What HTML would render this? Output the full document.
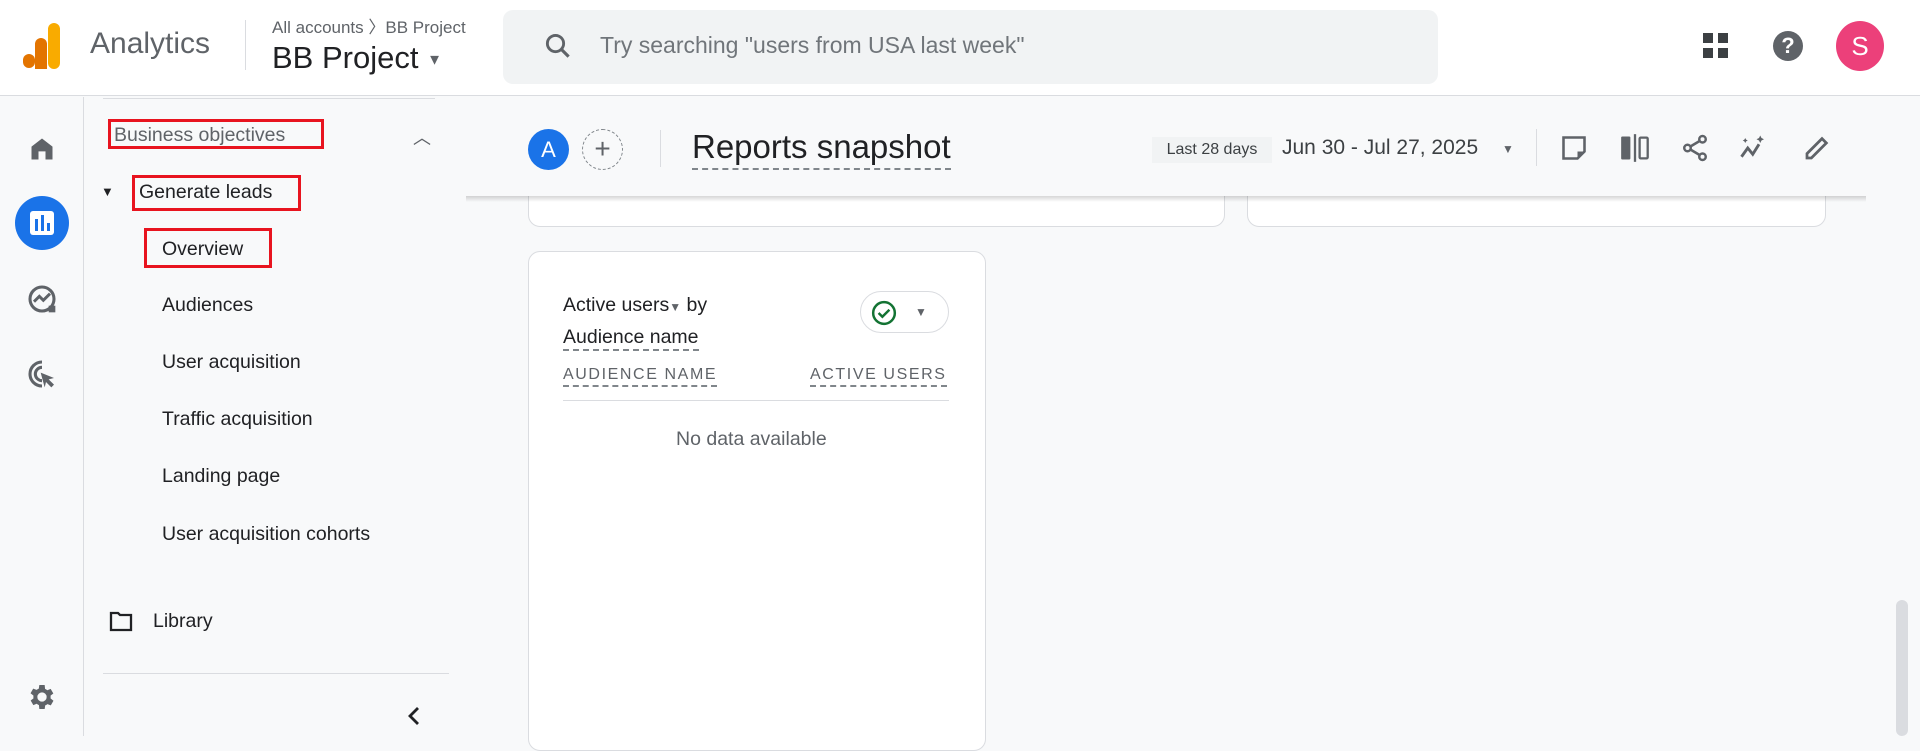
<!DOCTYPE html>
<html><head><meta charset="utf-8"><style>
*{box-sizing:border-box;margin:0;padding:0}
body{width:1920px;height:736px;overflow:hidden;background:#f8f9fa;font-family:"Liberation Sans",sans-serif;color:#202124;position:relative}
.a{position:absolute;white-space:nowrap}
.hdr{position:absolute;left:0;top:0;width:1920px;height:96px;background:#fff;border-bottom:1px solid #dadce0}
.nav{font-size:19.5px;color:#202124}
.red{position:absolute;border:3px solid #e8141f}
.dash{border-bottom:2px dashed #80868b}
</style></head><body>
<div class="hdr"></div>
<!-- logo -->
<div class="a" style="left:23px;top:54px;width:12px;height:14px;border-radius:6px;background:#e37400"></div>
<div class="a" style="left:35px;top:38px;width:12px;height:31px;border-radius:6px 6px 0 0;background:#e37400"></div>
<div class="a" style="left:48px;top:23px;width:12px;height:46px;border-radius:6px;background:#f9ab00"></div>
<div class="a" style="left:90px;top:27px;font-size:30px;color:#5f6368">Analytics</div>
<div class="a" style="left:245px;top:20px;width:1px;height:50px;background:#dadce0"></div>
<div class="a" style="left:272px;top:13px;font-size:17px;color:#5f6368">All accounts 〉BB Project</div>
<div class="a" style="left:272px;top:40px;font-size:31px;color:#202124">BB Project <span style="font-size:15px;color:#5f6368;vertical-align:middle">▼</span></div>
<div class="a" style="left:503px;top:10px;width:935px;height:74px;background:#f1f3f4;border-radius:10px"></div>
<svg class="a" style="left:543px;top:30px" width="30" height="32" viewBox="0 0 24 24"><circle cx="10" cy="10" r="6.5" fill="none" stroke="#5f6368" stroke-width="2.3"/><path d="M14.8 14.8L20.5 20.5" stroke="#5f6368" stroke-width="2.5"/></svg>
<div class="a" style="left:600px;top:32px;font-size:23px;color:#70757a">Try searching "users from USA last week"</div>
<svg class="a" style="left:1702px;top:32px" width="28" height="28"><rect x="1" y="1" width="10" height="10" fill="#3c4043"/><rect x="16" y="1" width="10" height="10" fill="#3c4043"/><rect x="1" y="16" width="10" height="10" fill="#3c4043"/><rect x="16" y="16" width="10" height="10" fill="#3c4043"/></svg>
<div class="a" style="left:1773px;top:31px;width:30px;height:30px;border-radius:50%;background:#5f6368;color:#fff;font-size:22px;font-weight:bold;text-align:center;line-height:30px">?</div>
<div class="a" style="left:1836px;top:21px;width:48px;height:50px;border-radius:50%;background:#ec407a;color:#fff;font-size:26px;text-align:center;line-height:50px">S</div>

<!-- rail -->
<div class="a" style="left:83px;top:97px;width:1px;height:639px;background:#dadce0"></div>
<svg class="a" style="left:28px;top:134px" width="28" height="30" viewBox="0 0 24 24"><path d="M3 10L12 3l9 7v11h-6v-7H9v7H3z" fill="#5f6368"/></svg>
<div class="a" style="left:15px;top:196px;width:54px;height:54px;border-radius:50%;background:#1a73e8"></div>
<div class="a" style="left:30px;top:211px;width:24px;height:24px;border-radius:3px;background:#fff"></div>
<div class="a" style="left:35px;top:219px;width:3px;height:12px;background:#1a73e8"></div>
<div class="a" style="left:41px;top:215px;width:3px;height:16px;background:#1a73e8"></div>
<div class="a" style="left:47px;top:223px;width:3px;height:8px;background:#1a73e8"></div>
<svg class="a" style="left:26px;top:283px" width="32" height="32" viewBox="0 0 24 24"><circle cx="12" cy="12" r="9" fill="none" stroke="#5f6368" stroke-width="2.3"/><path d="M6 14l4-4 3 3 5-5" fill="none" stroke="#5f6368" stroke-width="2.2"/><rect x="17" y="17" width="5" height="5" fill="#5f6368"/></svg>
<svg class="a" style="left:26px;top:358px" width="32" height="32" viewBox="0 0 24 24"><path d="M12 3a9 9 0 1 0 0 18" fill="none" stroke="#5f6368" stroke-width="2.3"/><path d="M12 7a5 5 0 1 0 0 10" fill="none" stroke="#5f6368" stroke-width="2.3"/><path d="M11 11l10 4-4 1 4 4-2 2-4-4-1 4z" fill="#5f6368"/></svg>
<svg class="a" style="left:26px;top:681px" width="32" height="32" viewBox="0 0 24 24"><path fill="#5f6368" d="M19.4 13a7.5 7.5 0 0 0 0-2l2.1-1.6-2-3.5-2.5 1a7 7 0 0 0-1.7-1L15 3h-4l-.4 2.7a7 7 0 0 0-1.7 1l-2.5-1-2 3.5L6.6 11a7.5 7.5 0 0 0 0 2l-2.1 1.6 2 3.5 2.5-1a7 7 0 0 0 1.7 1L11 21h4l.4-2.7a7 7 0 0 0 1.7-1l2.5 1 2-3.5zM13 15.5a3.5 3.5 0 1 1 0-7 3.5 3.5 0 0 1 0 7z" transform="translate(-1 0)"/></svg>

<!-- nav -->
<div class="a" style="left:103px;top:98px;width:332px;height:1px;background:#dadce0"></div>
<div class="a nav" style="left:114px;top:124px;color:#5f6368">Business objectives</div>
<div class="red" style="left:108px;top:119px;width:216px;height:30px"></div>
<div class="a" style="left:413px;top:124px;font-size:18px;color:#5f6368">︿</div>
<div class="a" style="left:101px;top:184px;font-size:13px">▼</div>
<div class="a nav" style="left:139px;top:181px">Generate leads</div>
<div class="red" style="left:132px;top:175px;width:169px;height:36px"></div>
<div class="a nav" style="left:162px;top:238px">Overview</div>
<div class="red" style="left:144px;top:228px;width:128px;height:40px"></div>
<div class="a nav" style="left:162px;top:294px">Audiences</div>
<div class="a nav" style="left:162px;top:351px">User acquisition</div>
<div class="a nav" style="left:162px;top:408px">Traffic acquisition</div>
<div class="a nav" style="left:162px;top:465px">Landing page</div>
<div class="a nav" style="left:162px;top:523px">User acquisition cohorts</div>
<svg class="a" style="left:109px;top:610px" width="24" height="22" viewBox="0 0 24 22"><path d="M2 3h7l2 2h11v15H2z" fill="none" stroke="#202124" stroke-width="2.3"/></svg>
<div class="a nav" style="left:153px;top:610px">Library</div>
<div class="a" style="left:103px;top:673px;width:346px;height:1px;background:#dadce0"></div>
<svg class="a" style="left:406px;top:705px" width="16" height="22"><path d="M12 3L4 11l8 8" fill="none" stroke="#202124" stroke-width="2.8"/></svg>

<!-- cards top -->
<div class="a" style="left:528px;top:150px;width:697px;height:77px;background:#fff;border:1px solid #dadce0;border-radius:12px"></div>
<div class="a" style="left:1247px;top:150px;width:579px;height:77px;background:#fff;border:1px solid #dadce0;border-radius:12px"></div>
<!-- report header -->
<div class="a" style="left:466px;top:97px;width:1400px;height:99px;background:#f8f9fa"></div>
<div class="a" style="left:466px;top:196px;width:1400px;height:6px;background:linear-gradient(to bottom,rgba(0,0,0,.16),rgba(0,0,0,0))"></div>
<div class="a" style="left:528px;top:129px;width:41px;height:41px;border-radius:50%;background:#1a73e8;color:#fff;font-size:22px;text-align:center;line-height:41px">A</div>
<div class="a" style="left:582px;top:129px;width:41px;height:41px;border-radius:50%;border:1px dashed #80868b;color:#5f6368;font-size:28px;text-align:center;line-height:38px">+</div>
<div class="a" style="left:660px;top:130px;width:1px;height:37px;background:#dadce0"></div>
<div class="a dash" style="left:692px;top:127px;font-size:33px;line-height:40px;padding-bottom:1px">Reports snapshot</div>
<div class="a" style="left:1152px;top:137px;width:120px;height:26px;background:#f1f3f4;font-size:16px;color:#3c4043;line-height:26px;text-align:center">Last 28 days</div>
<div class="a" style="left:1282px;top:136px;font-size:21px;color:#3c4043">Jun 30 - Jul 27, 2025</div>
<div class="a" style="left:1502px;top:142px;font-size:12px;color:#5f6368">▼</div>
<div class="a" style="left:1536px;top:129px;width:1px;height:37px;background:#dadce0"></div>
<svg class="a" style="left:1560px;top:134px" width="28" height="28" viewBox="0 0 24 24"><path d="M3 3h18v12l-6 6H3z" fill="none" stroke="#5f6368" stroke-width="2.2"/><path d="M15 21v-6h6z" fill="#5f6368"/></svg>
<svg class="a" style="left:1620px;top:134px" width="30" height="28" viewBox="0 0 26 24"><rect x="1" y="2" width="8" height="20" rx="1" fill="#5f6368"/><rect x="12" y="0" width="2" height="24" fill="#5f6368"/><rect x="17" y="3" width="7" height="18" rx="1" fill="none" stroke="#5f6368" stroke-width="2"/></svg>
<svg class="a" style="left:1680px;top:133px" width="30" height="30" viewBox="0 0 24 24"><circle cx="18" cy="5" r="2.6" fill="none" stroke="#5f6368" stroke-width="2"/><circle cx="6" cy="12" r="2.6" fill="none" stroke="#5f6368" stroke-width="2"/><circle cx="18" cy="19" r="2.6" fill="none" stroke="#5f6368" stroke-width="2"/><path d="M8.3 10.8l7.4-4.4M8.3 13.2l7.4 4.4" stroke="#5f6368" stroke-width="2"/></svg>
<svg class="a" style="left:1738px;top:133px" width="32" height="30" viewBox="0 0 24 24"><path d="M2 19l5-7 4 5 5-8" fill="none" stroke="#5f6368" stroke-width="2.3"/><path d="M17 2l1 2 2 1-2 1-1 2-1-2-2-1 2-1zM5 4l.7 1.3L7 6l-1.3.7L5 8l-.7-1.3L3 6l1.3-.7z" fill="#5f6368"/></svg>
<svg class="a" style="left:1802px;top:133px" width="30" height="30" viewBox="0 0 24 24"><path d="M4 20v-3.5L16 4.5l3.5 3.5L7.5 20z" fill="none" stroke="#5f6368" stroke-width="2.2"/></svg>

<!-- main card -->
<div class="a" style="left:528px;top:251px;width:458px;height:500px;background:#fff;border:1px solid #dadce0;border-radius:12px"></div>
<div class="a" style="left:563px;top:294px;font-size:19.5px;color:#202124">Active users<span style="font-size:12px;color:#5f6368">▼</span> by</div>
<div class="a dash" style="left:563px;top:325px;font-size:19.5px;line-height:24px">Audience name</div>
<div class="a" style="left:860px;top:291px;width:89px;height:42px;border:1px solid #dadce0;border-radius:21px"></div>
<svg class="a" style="left:871px;top:300px" width="26" height="26" viewBox="0 0 24 24"><circle cx="12" cy="12" r="10" fill="none" stroke="#137333" stroke-width="2.3"/><path d="M7 12l3.5 3.5L17 9" fill="none" stroke="#137333" stroke-width="2.3"/></svg>
<div class="a" style="left:915px;top:305px;font-size:12px;color:#5f6368">▼</div>
<div class="a dash" style="left:563px;top:365px;font-size:16px;letter-spacing:1.6px;color:#5f6368;line-height:20px">AUDIENCE NAME</div>
<div class="a dash" style="left:810px;top:365px;font-size:16px;letter-spacing:1.6px;color:#5f6368;line-height:20px">ACTIVE USERS</div>
<div class="a" style="left:563px;top:400px;width:386px;height:1px;background:#dadce0"></div>
<div class="a" style="left:676px;top:428px;font-size:19.5px;color:#5f6368">No data available</div>
<!-- scrollbar -->
<div class="a" style="left:1896px;top:600px;width:12px;height:136px;background:#dadce0;border-radius:6px"></div>
</body></html>
